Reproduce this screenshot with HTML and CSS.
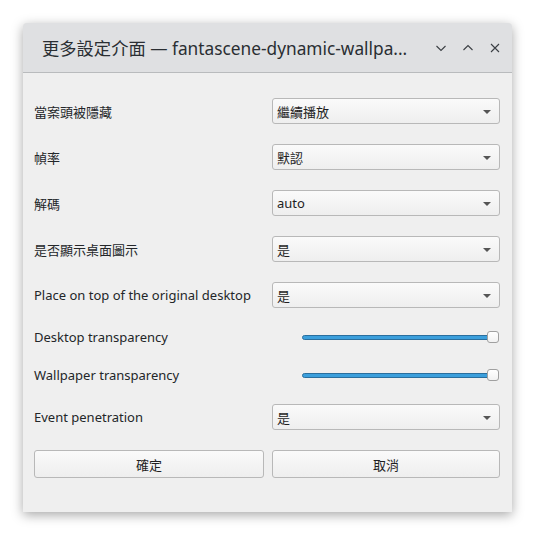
FILE: index.html
```html
<!DOCTYPE html>
<html>
<head>
<meta charset="utf-8">
<link rel="stylesheet" href="styles.css">
</head>
<body>
<div class="window">
  <div class="titlebar">
    <div class="title">更多設定介面 — fantascene-dynamic-wallpa...</div>
    <div class="controls">
      <svg class="ctl" viewBox="0 0 12 12"><path d="M1.5 4 L6 8.5 L10.5 4" /></svg>
      <svg class="ctl" viewBox="0 0 12 12"><path d="M1.5 8 L6 3.5 L10.5 8" /></svg>
      <svg class="ctl" viewBox="0 0 12 12"><path d="M2 2 L10 10 M10 2 L2 10" /></svg>
    </div>
  </div>
  <div class="content">
    <div class="row">
      <div class="label">當案頭被隱藏</div>
      <div class="combo"><span>繼續播放</span><span class="arrow"></span></div>
    </div>
    <div class="row">
      <div class="label">幀率</div>
      <div class="combo"><span>默認</span><span class="arrow"></span></div>
    </div>
    <div class="row">
      <div class="label">解碼</div>
      <div class="combo"><span>auto</span><span class="arrow"></span></div>
    </div>
    <div class="row">
      <div class="label">是否顯示桌面圖示</div>
      <div class="combo"><span>是</span><span class="arrow"></span></div>
    </div>
    <div class="row">
      <div class="label">Place on top of the original desktop</div>
      <div class="combo"><span>是</span><span class="arrow"></span></div>
    </div>
    <div class="row slim">
      <div class="label">Desktop transparency</div>
      <div class="slider"><div class="groove"></div><div class="handle"></div></div>
    </div>
    <div class="row slim">
      <div class="label">Wallpaper transparency</div>
      <div class="slider"><div class="groove"></div><div class="handle"></div></div>
    </div>
    <div class="row">
      <div class="label">Event penetration</div>
      <div class="combo"><span>是</span><span class="arrow"></span></div>
    </div>
    <div class="buttons">
      <div class="btn">確定</div>
      <div class="btn">取消</div>
    </div>
  </div>
</div>
</body>
</html>
```

FILE: styles.css
```css
* { box-sizing: border-box; }
html, body {
  margin: 0;
  padding: 0;
  background: #ffffff;
}
body {
  font-family: "Noto Sans", "Noto Sans CJK TC", sans-serif;
  color: #232629;
  padding: 23px;
}
.window {
  width: 489px;
  height: 489px;
  background: #efefef;
  border-radius: 4px 4px 0 0;
  box-shadow: 0 3px 12px rgba(0,0,0,0.35);
  display: flex;
  flex-direction: column;
  overflow: hidden;
}
.titlebar {
  height: 50px;
  background: #dfe0e2;
  border-bottom: 1px solid #b9bbbd;
  display: flex;
  align-items: center;
  padding: 0 11px 0 19px;
  flex-shrink: 0;
}
.title {
  flex: 1;
  font-size: 17.3px;
  color: #2a2e32;
  white-space: nowrap;
  font-family: "Noto Sans", "Noto Sans CJK TC", sans-serif;
}
.controls {
  display: flex;
  gap: 15px;
  align-items: center;
}
.ctl {
  width: 12px;
  height: 12px;
  fill: none;
  stroke: #3b3f44;
  stroke-width: 1.1;
}
.content {
  padding: 25px 12px 0 11px;
  display: flex;
  flex-direction: column;
  gap: 20px;
}
.row {
  display: flex;
  align-items: center;
  justify-content: space-between;
  height: 26px;
}
.row.slim { height: 18px; }
.label {
  font-size: 13px;
  color: #232629;
}
.combo {
  width: 228px;
  height: 26px;
  border: 1px solid #b8b8b8;
  border-radius: 3px;
  background: linear-gradient(#fafafa, #eeeeee);
  display: flex;
  align-items: center;
  justify-content: space-between;
  padding: 0 8px 0 4px;
  font-size: 13px;
  color: #1f1f1f;
}
.arrow {
  width: 0;
  height: 0;
  border-left: 4px solid transparent;
  border-right: 4px solid transparent;
  border-top: 4px solid #555;
  margin-top: 1px;
}
.slider {
  width: 197px;
  height: 18px;
  position: relative;
  margin-right: 1px;
}
.groove {
  position: absolute;
  left: 0;
  right: 4px;
  top: 7px;
  height: 5px;
  border-radius: 3px;
  background: #3b9fdc;
  border: 1px solid #2a6f9e;
}
.handle {
  position: absolute;
  right: 0;
  top: 3px;
  width: 12px;
  height: 12px;
  background: linear-gradient(#ffffff, #f2f2f2);
  border: 1px solid #a0a0a0;
  border-radius: 3px;
}
.buttons {
  display: grid;
  grid-template-columns: 1fr 228px;
  gap: 8px;
}
.btn {
  height: 28px;
  border: 1px solid #b8b8b8;
  border-radius: 3px;
  background: linear-gradient(#fafafa, #eeeeee);
  display: flex;
  align-items: center;
  justify-content: center;
  font-size: 13px;
  color: #1f1f1f;
}
```
